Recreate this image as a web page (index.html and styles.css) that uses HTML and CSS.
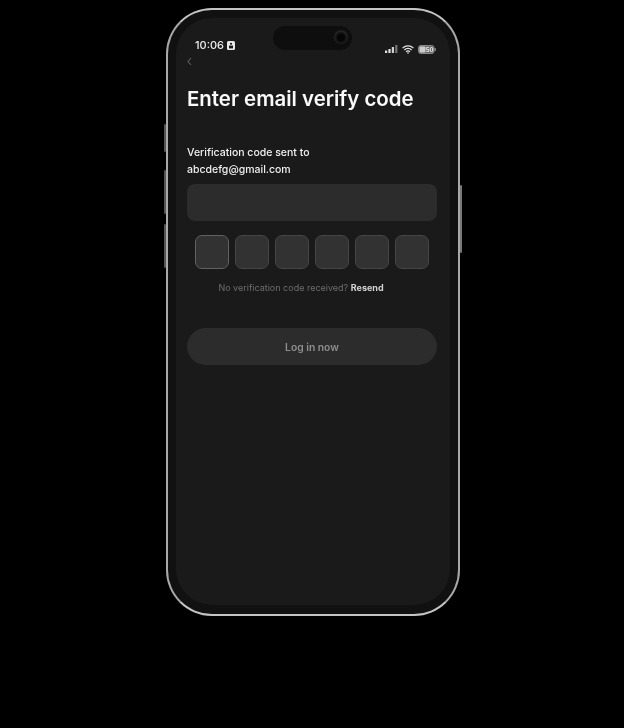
FILE: index.html
```html
<!DOCTYPE html>
<html lang="en">
<head>
<meta charset="utf-8">
<title>Enter email verify code</title>
<link rel="stylesheet" href="styles.css">
</head>
<body>
<div class="phone">
  <span class="side side-a"></span>
  <span class="side side-b"></span>
  <span class="side side-c"></span>
  <span class="side side-d"></span>
  <main class="screen">
    <header class="status">
      <div class="status-left">
        <span class="time">10:06</span>
        <svg class="badge" viewBox="0 0 8 9" width="8" height="9"><rect x="0" y="0" width="8" height="9" rx="1.5" fill="#e8e8e8"/><circle cx="4" cy="2.8" r="1.1" fill="#1a1a1a"/><rect x="2" y="4.6" width="4" height="2.8" fill="#1a1a1a"/></svg>
      </div>
      <div class="island"><span class="camera"></span></div>
      <div class="status-right">
        <svg viewBox="0 0 13 8" width="13" height="8"><rect x="0" y="5.5" width="2.2" height="2.5" fill="#e0e0e0"/><rect x="3.4" y="4" width="2.2" height="4" fill="#e0e0e0"/><rect x="6.8" y="2" width="2.2" height="6" fill="#d0d0d0"/><rect x="10.2" y="0" width="2.2" height="8" fill="#777"/></svg>
        <svg viewBox="0 0 12 9" width="12" height="9"><path d="M0.6 3.1A7.6 7.6 0 0 1 11.4 3.1M2.4 5A5 5 0 0 1 9.6 5M4.1 6.8A2.6 2.6 0 0 1 7.9 6.8" fill="none" stroke="#e4e4e4" stroke-width="1.3"/><path d="M6 9L4.9 7.8A1.6 1.6 0 0 1 7.1 7.8Z" fill="#e4e4e4"/></svg>
        <svg viewBox="0 0 18 9" width="18" height="9"><rect x="0.5" y="0.5" width="15.5" height="8" rx="2.2" fill="#6a6a6a" stroke="#999" stroke-width="0.8"/><rect x="1.5" y="1.5" width="6" height="6" rx="1" fill="#ccc"/><rect x="16.6" y="3" width="1.2" height="3" rx="0.6" fill="#999"/><text x="11.6" y="7" class="batt">50</text></svg>
      </div>
    </header>
    <svg class="back" viewBox="0 0 5 9" width="5" height="9"><path d="M4 1L1 4.5L4 8" fill="none" stroke="#5e5e5e" stroke-width="1.1"/></svg>
    <h1 class="title">Enter email verify code</h1>
    <p class="label">Verification code sent to<br>abcdefg@gmail.com</p>
    <div class="field"></div>
    <div class="cells">
      <span class="cell cell-active"></span>
      <span class="cell"></span>
      <span class="cell"></span>
      <span class="cell"></span>
      <span class="cell"></span>
      <span class="cell"></span>
    </div>
    <p class="hint">No verification code received? <strong class="resend">Resend</strong></p>
    <button class="submit" type="button">Log in now</button>
  </main>
</div>
</body>
</html>
```
FILE: styles.css
```css
* { box-sizing: border-box; }
html, body { margin: 0; padding: 0; }
body {
  width: 624px;
  height: 728px;
  background: #000;
  overflow: hidden;
  font-family: Inter, "Liberation Sans", sans-serif;
  padding: 8px 0 0 166px;
}
.phone {
  position: relative;
  width: 294px;
  height: 608px;
  padding: 8px 8px 9px 8px;
  border: 2px solid #a8a8a8;
  border-top-color: #c4c4c4;
  border-bottom-color: #c4c4c4;
  border-radius: 46px;
  background: #111;
}
.side {
  position: absolute;
  width: 2px;
  background: #555;
  border-radius: 1px;
}
.side-a { left: -4px; top: 114px; height: 28px; }
.side-b { left: -4px; top: 160px; height: 44px; }
.side-c { left: -4px; top: 214px; height: 44px; }
.side-d { right: -4px; top: 175px; height: 68px; background: #777; }
.screen {
  height: 100%;
  padding: 8px 13px 0 11px;
  border-radius: 36px;
  background: #1a1a1a;
  display: flex;
  flex-direction: column;
  filter: blur(0.5px);
}
.status {
  display: grid;
  grid-template-columns: 86px 79px 1fr;
  height: 30px;
  flex: none;
}
.status-left {
  display: flex;
  align-items: center;
  gap: 3px;
  padding: 14px 0 0 8px;
  height: 24px;
}
.time {
  font-size: 11px;
  line-height: 13px;
  font-weight: 500;
  color: #ececec;
}
.island {
  display: flex;
  align-items: center;
  justify-content: flex-end;
  height: 24px;
  padding: 0 4px 2px 0;
  border-radius: 12px;
  background: #0e0e0e;
}
.camera {
  width: 14px;
  height: 14px;
  border-radius: 50%;
  background: radial-gradient(circle at 50% 55%, #050505 0 30%, #242424 65%, #121212 100%);
}
.status-right {
  display: flex;
  align-items: center;
  justify-content: flex-end;
  gap: 4px;
  padding: 18px 1px 0 0;
  height: 28px;
}
.batt {
  font-family: Inter, "Liberation Sans", sans-serif;
  font-size: 6px;
  font-weight: 700;
  fill: #eee;
  text-anchor: middle;
}
.back {
  display: block;
  flex: none;
  margin: 1px 0 0 0;
}
.title {
  margin: 20px 0 0;
  font-size: 20.4px;
  line-height: 26px;
  font-weight: 600;
  color: #fafafa;
  white-space: nowrap;
}
.label {
  margin: 32px 0 0;
  font-size: 10.5px;
  line-height: 17px;
  font-weight: 500;
  color: #f0f0f0;
}
.field {
  flex: none;
  height: 37px;
  margin-top: 6px;
  border-radius: 8px;
  background: #2c2c2c;
}
.cells {
  display: flex;
  gap: 6px;
  margin-top: 14px;
  padding-left: 8px;
}
.cell {
  width: 34px;
  height: 34px;
  border: 1px solid #444;
  border-radius: 7px;
  background: #323232;
}
.cell-active { border-color: #626262; }
.hint {
  margin: 12px 0 0;
  padding-right: 22px;
  font-size: 9px;
  line-height: 14px;
  color: #6e6e6e;
  text-align: center;
}
.resend {
  font-weight: 700;
  color: #d4d4d4;
}
.submit {
  flex: none;
  height: 37px;
  margin-top: 33px;
  border: 0;
  border-radius: 19px;
  background: #2c2c2c;
  color: #8e8e8e;
  font: 600 10.3px/14px Inter, "Liberation Sans", sans-serif;
}
```
